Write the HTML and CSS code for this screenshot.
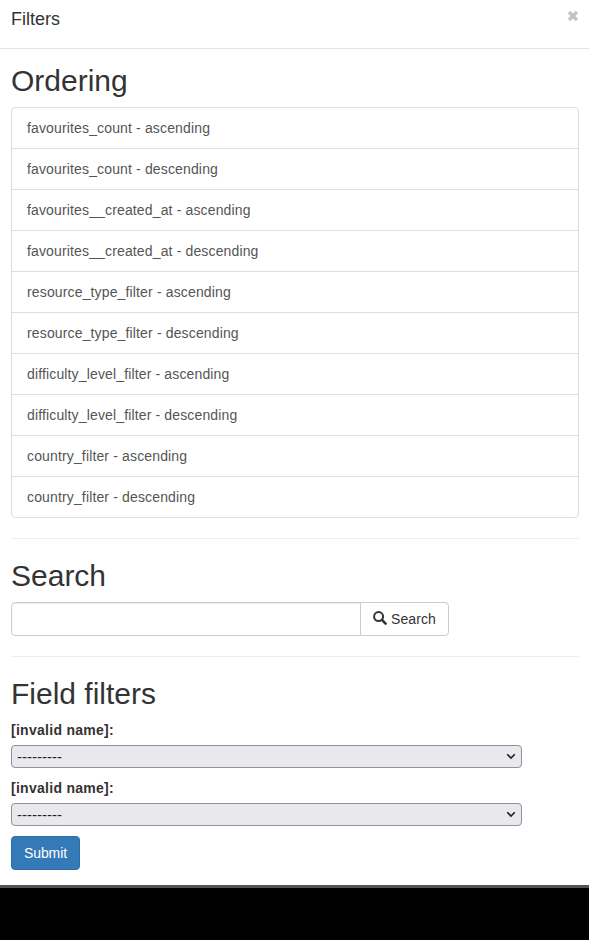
FILE: index.html
```html
<!DOCTYPE html>
<html lang="en">
<head>
<meta charset="utf-8">
<title>Filters</title>
<link rel="stylesheet" href="styles.css">
</head>
<body>
<div class="modal">
  <header class="modal-header">
    <h4>Filters</h4>
    <button class="close" type="button" aria-label="Close"><svg width="12" height="12" viewBox="0 0 12 12"><path d="M2 2L10 10M10 2L2 10" stroke="currentColor" stroke-width="3.4"/></svg></button>
  </header>
  <main class="modal-body">
    <h2>Ordering</h2>
    <div class="list-group">
      <a>favourites_count - ascending</a>
      <a>favourites_count - descending</a>
      <a>favourites__created_at - ascending</a>
      <a>favourites__created_at - descending</a>
      <a>resource_type_filter - ascending</a>
      <a>resource_type_filter - descending</a>
      <a>difficulty_level_filter - ascending</a>
      <a>difficulty_level_filter - descending</a>
      <a>country_filter - ascending</a>
      <a>country_filter - descending</a>
    </div>
    <hr>
    <h2>Search</h2>
    <form class="search">
      <input type="text" aria-label="Search">
      <button class="btn" type="button"><svg width="14" height="14" viewBox="0 0 14 14"><circle cx="5.6" cy="5.6" r="4.5" fill="none" stroke="currentColor" stroke-width="2"/><path d="M8.9 8.9L12.6 12.6" stroke="currentColor" stroke-width="2.6" stroke-linecap="round"/></svg>Search</button>
    </form>
    <hr>
    <h2>Field filters</h2>
    <form>
      <div class="field">
        <label>[invalid name]:</label>
        <div class="select"><span>---------</span><svg width="10" height="7" viewBox="0 0 10 7"><path d="M1.2 1.2L5 5L8.8 1.2" fill="none" stroke="currentColor" stroke-width="1.6"/></svg></div>
      </div>
      <div class="field">
        <label>[invalid name]:</label>
        <div class="select"><span>---------</span><svg width="10" height="7" viewBox="0 0 10 7"><path d="M1.2 1.2L5 5L8.8 1.2" fill="none" stroke="currentColor" stroke-width="1.6"/></svg></div>
      </div>
      <button class="btn btn-primary" type="button">Submit</button>
    </form>
  </main>
</div>
</body>
</html>
```
FILE: styles.css
```css
* { box-sizing: border-box; }
body {
  margin: 0;
  min-height: 940px;
  background: #000;
  color: #333;
  font: 14px/20px "Liberation Sans", Arial, sans-serif;
}
.modal {
  height: 888px;
  background: #fff;
  border-bottom: 3px solid #525554;
}
.modal-header {
  display: flex;
  justify-content: space-between;
  align-items: flex-start;
  height: 49px;
  padding: 7px 10px 0 11px;
  border-bottom: 1px solid #e5e5e5;
}
h2, h4 { margin: 0; font-weight: normal; }
h4 { font-size: 18px; line-height: 25px; }
h2 { margin-bottom: 10px; font-size: 30px; line-height: 33px; }
.close {
  display: flex;
  margin-top: 3px;
  padding: 0;
  border: 0;
  background: none;
  color: #c4c4c4;
}
.modal-body { padding: 15px 10px 15px 11px; }
.list-group {
  border: 1px solid #ddd;
  border-radius: 4px;
}
.list-group a {
  display: block;
  padding: 10px 15px;
  color: #555;
  letter-spacing: .145px;
}
.list-group a + a { border-top: 1px solid #ddd; }
hr {
  margin: 20px 0;
  border: 0;
  border-top: 1px solid #eee;
}
.search { display: flex; }
.search input {
  width: 350px;
  height: 34px;
  border: 1px solid #ccc;
  border-radius: 4px 0 0 4px;
  box-shadow: inset 0 1px 1px rgba(0, 0, 0, .075);
}
.btn {
  display: inline-flex;
  align-items: center;
  height: 34px;
  padding: 0 12px;
  border: 1px solid #ccc;
  border-radius: 4px;
  background: #fff;
  color: #333;
  font: inherit;
}
.btn svg { margin: -2px 4px 0 0; }
.search .btn {
  width: 89px;
  margin-left: -1px;
  border-radius: 0 4px 4px 0;
  letter-spacing: .1px;
}
.btn-primary {
  width: 69px;
  background: #337ab7;
  border-color: #2e6da4;
  color: #fff;
  letter-spacing: -.1px;
}
.field { margin-bottom: 10px; }
.field label {
  display: block;
  margin-bottom: 5px;
  font-weight: bold;
  letter-spacing: .28px;
}
.select {
  display: flex;
  align-items: center;
  justify-content: space-between;
  width: 511px;
  height: 23px;
  padding: 0 5px;
  border: 1px solid #8f8f9d;
  border-radius: 4px;
  background: #e9e9ed;
  color: #222;
}
.select span { font-size: 15px; }
```
